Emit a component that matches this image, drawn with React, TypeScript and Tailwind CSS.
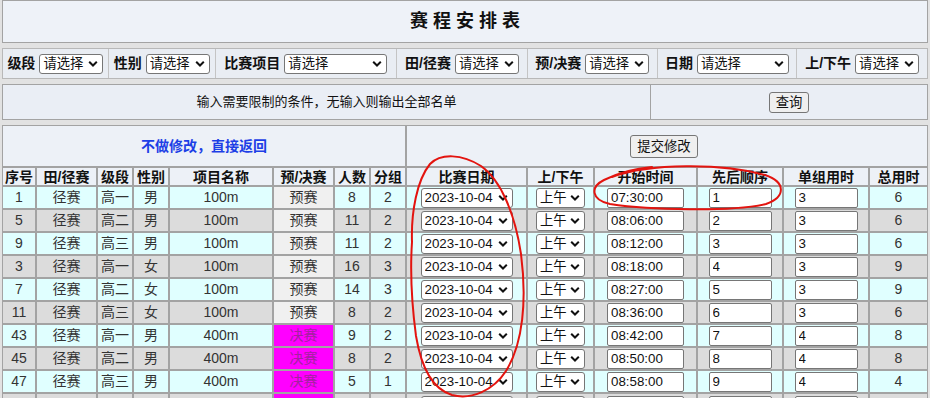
import React from 'react';

type Row = {
  id: number;
  kind: string;
  grade: string;
  sex: string;
  name: string;
  stage: string;
  count: number;
  groups: number;
  start: string;
  order: number;
  per: number;
  total: number;
};

const rows: Row[] = [
  { id: 1, kind: '径赛', grade: '高一', sex: '男', name: '100m', stage: '预赛', count: 8, groups: 2, start: '07:30:00', order: 1, per: 3, total: 6 },
  { id: 5, kind: '径赛', grade: '高二', sex: '男', name: '100m', stage: '预赛', count: 11, groups: 2, start: '08:06:00', order: 2, per: 3, total: 6 },
  { id: 9, kind: '径赛', grade: '高三', sex: '男', name: '100m', stage: '预赛', count: 11, groups: 2, start: '08:12:00', order: 3, per: 3, total: 6 },
  { id: 3, kind: '径赛', grade: '高一', sex: '女', name: '100m', stage: '预赛', count: 16, groups: 3, start: '08:18:00', order: 4, per: 3, total: 9 },
  { id: 7, kind: '径赛', grade: '高二', sex: '女', name: '100m', stage: '预赛', count: 14, groups: 3, start: '08:27:00', order: 5, per: 3, total: 9 },
  { id: 11, kind: '径赛', grade: '高三', sex: '女', name: '100m', stage: '预赛', count: 8, groups: 2, start: '08:36:00', order: 6, per: 3, total: 6 },
  { id: 43, kind: '径赛', grade: '高一', sex: '男', name: '400m', stage: '决赛', count: 9, groups: 2, start: '08:42:00', order: 7, per: 4, total: 8 },
  { id: 45, kind: '径赛', grade: '高二', sex: '男', name: '400m', stage: '决赛', count: 8, groups: 2, start: '08:50:00', order: 8, per: 4, total: 8 },
  { id: 47, kind: '径赛', grade: '高三', sex: '男', name: '400m', stage: '决赛', count: 5, groups: 1, start: '08:58:00', order: 9, per: 4, total: 4 },
];

const filters = [
  { label: '级段', cell: 'w-[105px]', sel: 'w-[64px]' },
  { label: '性别', cell: 'w-[107px]', sel: 'w-[64px]' },
  { label: '比赛项目', cell: 'w-[182px]', sel: 'w-[103px]' },
  { label: '田/径赛', cell: 'w-[131px]', sel: 'w-[64px]' },
  { label: '预/决赛', cell: 'w-[130px]', sel: 'w-[64px]' },
  { label: '日期', cell: 'w-[140px]', sel: 'w-[92px]' },
  { label: '上/下午', cell: 'w-[131px]', sel: 'w-[64px]' },
];

const headers = ['序号', '田/径赛', '级段', '性别', '项目名称', '预/决赛', '人数', '分组', '比赛日期', '上/下午', '开始时间', '先后顺序', '单组用时', '总用时'];
const colWidths = ['w-[34px]', 'w-[61px]', 'w-[36px]', 'w-[36px]', 'w-[104px]', 'w-[61px]', 'w-[36px]', 'w-[36px]', 'w-[121px]', 'w-[67px]', 'w-[103px]', 'w-[86px]', 'w-[86px]', 'w-[59px]'];

function Chevron() {
  return (
    <svg width="10" height="7" viewBox="0 0 10 7" className="pointer-events-none absolute right-[5px] top-1/2 -translate-y-1/2">
      <polyline points="1.2 1.3 5 5 8.8 1.3" fill="none" stroke="#111" strokeWidth="2" />
    </svg>
  );
}

function Select({ value, className }: { value: string; className: string }) {
  return (
    <span className="relative inline-flex">
      <select
        defaultValue={value}
        className={`${className} h-[20px] appearance-none rounded-[3px] border border-[#767676] bg-white pl-[3px] text-[13.33px] leading-[18px] text-[#111]`}
      >
        <option>{value}</option>
      </select>
      <Chevron />
    </span>
  );
}

function TextBox({ value, className }: { value: string; className: string }) {
  return (
    <input
      defaultValue={value}
      className={`${className} h-[20px] rounded-[2px] border border-[#767676] bg-white px-[3px] text-[13.33px] leading-[18px] text-[#111]`}
    />
  );
}

function Btn({ children, className }: { children: React.ReactNode; className: string }) {
  return (
    <button className={`${className} rounded-[3px] border border-[#767676] bg-[#efefef] px-[6px] text-[13.33px] leading-[17px] text-[#111]`}>
      {children}
    </button>
  );
}

const cell = 'border border-[#a3a3a3] p-0 text-center';

export default function App() {
  return (
    <div className="relative h-[398px] w-[930px] overflow-hidden bg-[#e2e2e2] px-[2px] font-['Liberation_Sans','Noto_Sans_CJK_SC',sans-serif] text-[#333]">
      <div className="flex flex-col gap-[5px]">
        {/* title */}
        <div className="flex h-[43px] items-center justify-center border border-[#a3a3a3] bg-[#eef2f8]">
          <span className="text-[18px] font-bold text-[#111]">赛 程 安 排 表</span>
        </div>

        {/* filters */}
        <div className="flex h-[31px] border border-[#b8b8b8] bg-[#e9edf3]">
          {filters.map((f, i) => (
            <div
              key={f.label}
              className={`${f.cell} flex items-center justify-center gap-[4px] ${i > 0 ? 'border-l border-[#c4c4c4]' : ''}`}
            >
              <span className="text-[14px] font-bold text-[#111]">{f.label}</span>
              <Select value="请选择" className={f.sel} />
            </div>
          ))}
        </div>

        {/* query row */}
        <div className="flex h-[36px] border border-[#a3a3a3] bg-[#eaeef5]">
          <div className="flex w-[648px] items-center justify-center border-r border-[#a3a3a3] text-[13px] text-[#111]">
            输入需要限制的条件，无输入则输出全部名单
          </div>
          <div className="flex flex-1 items-center justify-center">
            <Btn className="h-[21px]">查询</Btn>
          </div>
        </div>

        {/* schedule table */}
        <table className="w-[926px] table-fixed border-separate border-spacing-0 text-[14px]">
          <colgroup>
            {colWidths.map((w, i) => (
              <col key={i} className={w} />
            ))}
          </colgroup>
          <tbody>
            <tr className="h-[42px] bg-[#edf1f7]">
              <td colSpan={8} className={cell}>
                <span className="font-bold text-[#1d3fe6]">不做修改，直接返回</span>
              </td>
              <td colSpan={6} className={cell}>
                <Btn className="-ml-[6px] h-[23px]">提交修改</Btn>
              </td>
            </tr>
            <tr className="h-[19px] bg-[#edf1f7]">
              {headers.map((h) => (
                <td key={h} className={`${cell} leading-[16px] font-bold text-[#111]`}>
                  {h}
                </td>
              ))}
            </tr>
            {rows.map((r, i) => (
              <tr key={r.id} className={`h-[23px] ${i % 2 === 0 ? 'bg-[#e0ffff]' : 'bg-[#dcdcdc]'}`}>
                <td className={cell}>{r.id}</td>
                <td className={cell}>{r.kind}</td>
                <td className={cell}>{r.grade}</td>
                <td className={cell}>{r.sex}</td>
                <td className={cell}>{r.name}</td>
                <td className={`${cell} ${r.stage === '决赛' ? 'bg-[#ff00ff] text-[#a3229f]' : 'bg-[#f0f0f0]'}`}>{r.stage}</td>
                <td className={cell}>{r.count}</td>
                <td className={cell}>{r.groups}</td>
                <td className={cell}>
                  <Select value="2023-10-04" className="w-[92px]" />
                </td>
                <td className={cell}>
                  <Select value="上午" className="w-[49px]" />
                </td>
                <td className={cell}>
                  <TextBox value={r.start} className="w-[77px]" />
                </td>
                <td className={cell}>
                  <TextBox value={String(r.order)} className="w-[63px]" />
                </td>
                <td className={cell}>
                  <TextBox value={String(r.per)} className="w-[63px]" />
                </td>
                <td className={cell}>{r.total}</td>
              </tr>
            ))}
            {/* next row, only its top edge is in view */}
            <tr className="h-[23px] bg-[#dcdcdc]">
              <td className={cell} />
              <td className={cell} />
              <td className={cell} />
              <td className={cell} />
              <td className={cell} />
              <td className={`${cell} bg-[#ff00ff]`} />
              <td className={cell} />
              <td className={cell} />
              <td className={`${cell} pt-[2px] align-top`}>
                <span className="inline-block h-[20px] w-[92px] rounded-[3px] border border-[#767676] bg-white" />
              </td>
              <td className={`${cell} pt-[2px] align-top`}>
                <span className="inline-block h-[20px] w-[49px] rounded-[3px] border border-[#767676] bg-white" />
              </td>
              <td className={`${cell} pt-[2px] align-top`}>
                <span className="inline-block h-[20px] w-[77px] rounded-[2px] border border-[#767676] bg-white" />
              </td>
              <td className={`${cell} pt-[2px] align-top`}>
                <span className="inline-block h-[20px] w-[63px] rounded-[2px] border border-[#767676] bg-white" />
              </td>
              <td className={`${cell} pt-[2px] align-top`}>
                <span className="inline-block h-[20px] w-[63px] rounded-[2px] border border-[#767676] bg-white" />
              </td>
              <td className={cell} />
            </tr>
          </tbody>
        </table>
      </div>

      {/* hand-drawn red marks */}
      <svg className="pointer-events-none absolute left-0 top-0" width="930" height="398" viewBox="0 0 930 398">
        <path
          d="M 412 242 C 411 212, 417 180, 430 164 C 441 153, 462 154, 481 166 C 501 180, 515 214, 521 254 C 527 300, 523 344, 506 371 C 493 391, 471 400, 452 395 C 432 389, 421 366, 416 336 C 412 306, 410 272, 412 242"
          fill="none"
          stroke="#e3140f"
          strokeWidth="2"
          strokeLinecap="round"
        />
        <path
          d="M 612 177 C 650 163, 722 163, 765 175 C 786 182, 786 197, 766 204 C 730 212, 650 210, 610 204 C 591 200, 590 187, 604 180 C 620 172, 640 168, 652 167"
          fill="none"
          stroke="#e3140f"
          strokeWidth="2"
          strokeLinecap="round"
        />
      </svg>
    </div>
  );
}
